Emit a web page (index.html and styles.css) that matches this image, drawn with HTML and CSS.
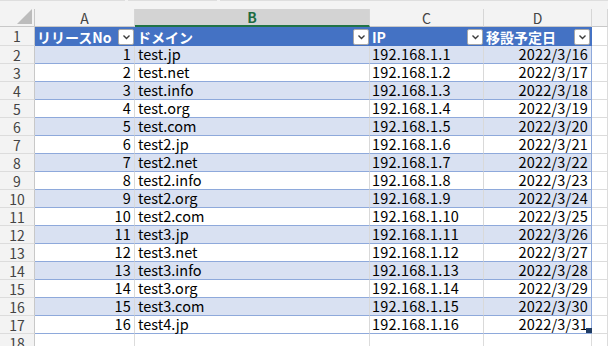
FILE: index.html
```html
<!DOCTYPE html>
<html lang="ja">
<head>
    <meta charset="UTF-8">
    <title>移設一覧</title>
    <link rel="stylesheet" href="styles.css">
</head>
<body>
    <div class="toolbar">
        <span class="tb-seg tb-name"></span>
        <span class="tb-seg tb-fx"></span>
        <span class="tb-seg tb-formula"></span>
    </div>

    <div class="sheet" id="sheet">
        <div class="corner"></div>
        <div class="col-head">A</div>
        <div class="col-head selected">B</div>
        <div class="col-head">C</div>
        <div class="col-head">D</div>
        <div class="col-head"></div>

        <div class="row-head">1</div>
        <div class="th"><span>リリースNo</span><span class="filter"></span></div>
        <div class="th"><span>ドメイン</span><span class="filter"></span></div>
        <div class="th"><span>IP</span><span class="filter"></span></div>
        <div class="th last"><span>移設予定日</span><span class="filter"></span></div>
        <div class="cell"></div>
    </div>

    <div class="resize-handle"></div>

    <script>
        const domains = ['test.jp', 'test.net', 'test.info', 'test.org', 'test.com',
            'test2.jp', 'test2.net', 'test2.info', 'test2.org', 'test2.com',
            'test3.jp', 'test3.net', 'test3.info', 'test3.org', 'test3.com',
            'test4.jp'];

        const chevron = '<svg width="9" height="6" viewBox="0 0 9 6"><path d="M1.5 1.5 L4.5 4.5 L7.5 1.5" fill="none" stroke="#3c3c3c" stroke-width="1.4"/></svg>';

        function buildRows() {
            const sheet = document.getElementById('sheet');
            sheet.querySelectorAll('.filter').forEach(el => el.innerHTML = chevron);

            const rowsHtml = domains.map((domain, i) => {
                const no = i + 1;
                const band = no % 2 === 1 ? ' band' : '';
                return `
                    <div class="row-head">${no + 1}</div>
                    <div class="td num${band}">${no}</div>
                    <div class="td${band}">${domain}</div>
                    <div class="td ip${band}">192.168.1.${no}</div>
                    <div class="td num last${band}">2022/3/${15 + no}</div>
                    <div class="cell"></div>
                `;
            }).join('');

            // empty row 18, cut by the window
            const tail = '<div class="row-head">18</div>' + '<div class="cell"></div>'.repeat(5);
            sheet.insertAdjacentHTML('beforeend', rowsHtml + tail);
        }

        buildRows();
    </script>
</body>
</html>
```

FILE: styles.css
```css
body {
    margin: 0;
    background: #fff;
    font-family: "Noto Sans CJK JP", "Noto Sans", sans-serif;
    font-size: 14.5px;
    color: #000;
    overflow: hidden;
    position: relative;
    height: 346px;
}
.toolbar {
    display: flex;
    gap: 3px;
    height: 9px;
    background: #f3f3f3;
}
.tb-seg {
    border-top: 1px solid #dedede;
}
.tb-name { width: 125px; }
.tb-fx { width: 89px; }
.tb-formula { flex: 1; }

.sheet {
    display: grid;
    grid-template-columns: 35px 100px 235px 114px 108px 16px;
    grid-template-rows: 18px 19px repeat(17, 18px);
}
.sheet > div {
    box-sizing: border-box;
    display: flex;
    align-items: center;
    white-space: nowrap;
    line-height: 1;
}
.corner {
    background: #f3f3f3;
    border-right: 1px solid #c8c8c8;
    border-bottom: 1px solid #c8c8c8;
    justify-content: flex-end;
    align-items: flex-end !important;
    padding: 0 2px 2px 0;
}
.corner::after {
    content: "";
    width: 15px;
    height: 15px;
    background: #bcbcbc;
    clip-path: polygon(100% 0, 100% 100%, 0 100%);
}
.col-head {
    background: #f3f3f3;
    color: #444;
    justify-content: center;
    font-size: 14px;
    border-right: 1px solid #d6d6d6;
    border-bottom: 1px solid #c8c8c8;
}
.col-head.selected {
    background: #d3d3d3;
    color: #1d6b41;
    font-weight: bold;
    border-bottom: 2px solid #217346;
}
.row-head {
    background: #f3f3f3;
    color: #444;
    justify-content: center;
    font-size: 14px;
    border-right: 1px solid #c8c8c8;
    border-bottom: 1px solid #dcdcdc;
}
.cell {
    border-right: 1px solid #dcdcdc;
    border-bottom: 1px solid #dcdcdc;
}
.th {
    background: #4472c4;
    color: #fff;
    font-weight: bold;
    font-size: 14px;
    padding: 0 1px 0 2px;
    gap: 2px;
}
.th.last {
    border-right: 1px solid #4472c4;
}
.filter {
    margin-left: auto;
    width: 16px;
    height: 16px;
    box-sizing: border-box;
    background: #fff;
    border: 1px solid #a8a8a8;
    border-radius: 2px;
    display: flex;
    align-items: center;
    justify-content: center;
}
.td {
    padding: 0 3px;
    border-right: 1px solid #d9d9d9;
    border-bottom: 1px solid #8ea9db;
}
.td.band {
    background: #d9e1f2;
}
.td.num {
    justify-content: flex-end;
    letter-spacing: 0.2px;
}
.td.ip {
    padding-left: 2px;
    letter-spacing: 0.2px;
}
.td.last {
    border-right: 1px solid #8ea9db;
}
.resize-handle {
    position: absolute;
    left: 586px;
    top: 328px;
    width: 6px;
    height: 5px;
    background: #1f3b63;
}
```
